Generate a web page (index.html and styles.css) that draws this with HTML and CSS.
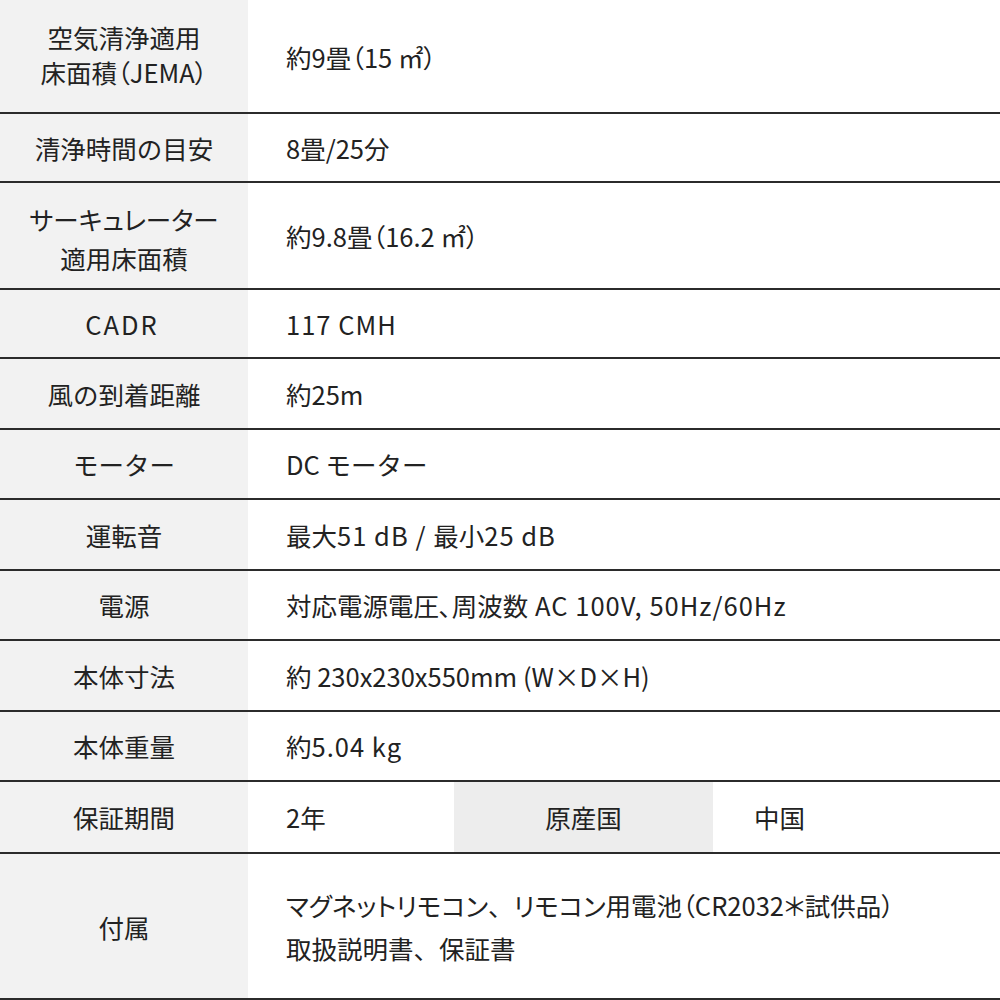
FILE: index.html
```html
<!DOCTYPE html>
<html lang="ja">
<head>
<meta charset="utf-8">
<title>仕様</title>
<link rel="stylesheet" href="styles.css">
</head>
<body>
<div class="spec">
  <div class="row h114 lh35">
    <div class="label"><div>空気清浄適用<br>床面積<span class="pp">（</span>JEMA<span class="pp">）</span></div></div>
    <div class="value"><div>約9畳<span class="pp">（</span>15 ㎡<span class="pp">）</span></div></div>
  </div>
  <div class="row h69">
    <div class="label"><div>清浄時間の目安</div></div>
    <div class="value"><div>8畳/25分</div></div>
  </div>
  <div class="row h107 lh39">
    <div class="label"><div><span class="pp">サーキュレーター</span><br>適用床面積</div></div>
    <div class="value"><div>約9.8畳<span class="pp">（</span>16.2 ㎡<span class="pp">）</span></div></div>
  </div>
  <div class="row h69">
    <div class="label"><div class="caps">CADR</div></div>
    <div class="value"><div class="lat">117 CMH</div></div>
  </div>
  <div class="row h71">
    <div class="label"><div>風の到着距離</div></div>
    <div class="value"><div>約25m</div></div>
  </div>
  <div class="row h70">
    <div class="label"><div>モーター</div></div>
    <div class="value"><div>DC モーター</div></div>
  </div>
  <div class="row h71">
    <div class="label"><div>運転音</div></div>
    <div class="value"><div>最大<span class="lat">51 dB / </span>最小<span class="lat">25 dB</span></div></div>
  </div>
  <div class="row h70">
    <div class="label"><div>電源</div></div>
    <div class="value"><div>対応電源電圧､周波数<span class="lat"> AC 100V, 50Hz/60Hz</span></div></div>
  </div>
  <div class="row h71">
    <div class="label"><div>本体寸法</div></div>
    <div class="value"><div>約 230x230x550mm (W×D×H)</div></div>
  </div>
  <div class="row h70">
    <div class="label"><div>本体重量</div></div>
    <div class="value"><div>約<span class="lat">5.04 kg</span></div></div>
  </div>
  <div class="row h72">
    <div class="label"><div>保証期間</div></div>
    <div class="value split">
      <div class="cell">2年</div>
      <div class="cell sub-label">原産国</div>
      <div class="cell last">中国</div>
    </div>
  </div>
  <div class="row h146 lh43">
    <div class="label"><div>付属</div></div>
    <div class="value"><div><span class="pp">マグネットリモコン</span>、<span class="pp">リモコン</span>用電池<span class="pp">（</span>CR2032<span class="pp">＊</span>試供品<span class="pp">）</span><br>取扱説明書、保証書</div></div>
  </div>
</div>
</body>
</html>
```

FILE: styles.css
```css
html, body {
  margin: 0;
  padding: 0;
  background: #ffffff;
}

body {
  width: 1000px;
  height: 1000px;
  overflow: hidden;
  font-family: "Noto Sans CJK JP", "Noto Sans", sans-serif;
  font-size: 25.5px;
  font-weight: 400;
  color: #222222;
}

.spec {
  display: flex;
  flex-direction: column;
}

.row {
  display: grid;
  grid-template-columns: 248px 1fr;
  box-sizing: border-box;
  border-bottom: 2px solid #2b2b2b;
  line-height: 30px;
}

.label {
  background: #f2f2f2;
  display: flex;
  align-items: center;
  justify-content: center;
  text-align: center;
}

.value {
  display: flex;
  align-items: center;
  padding-left: 38px;
  white-space: nowrap;
}

.value.split {
  display: grid;
  grid-template-columns: 206px 259px 1fr;
  align-items: stretch;
  padding-left: 0;
}

.cell {
  display: flex;
  align-items: center;
  padding-left: 38px;
}

.cell.sub-label {
  background: #ededed;
  justify-content: center;
  padding-left: 0;
}

.cell.last {
  padding-left: 41px;
}

.pp {
  font-feature-settings: "palt";
}

.lat {
  letter-spacing: 0.04em;
}

.caps {
  letter-spacing: 2px;
  padding-right: 4px;
}

.h114 { height: 114px; }
.h69 { height: 69px; }
.h70 { height: 70px; }
.h71 { height: 71px; }
.h72 { height: 72px; }
.h107 { height: 107px; }
.h146 { height: 146px; }

.lh35 { line-height: 35px; }
.lh39 { line-height: 39px; }
.lh43 { line-height: 43px; }

.h114 .label { padding-bottom: 4px; }
.h107 .label { padding-top: 4px; }
```
